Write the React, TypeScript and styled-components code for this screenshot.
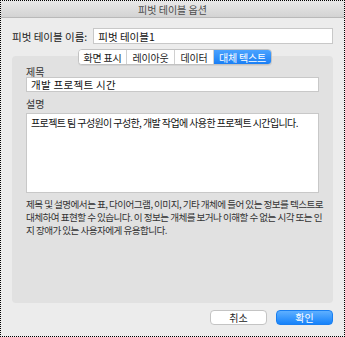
import React from 'react';
import styled, { createGlobalStyle } from 'styled-components';

const GlobalStyle = createGlobalStyle`
  html, body {
    margin: 0;
    padding: 0;
    background: #ececec;
  }
  body {
    font-family: "Noto Sans CJK KR", "Noto Sans", sans-serif;
    font-size: 11px;
    color: #222;
  }
`;

const Dialog = styled.div`
  width: 345px;
  height: 337px;
  box-sizing: border-box;
  border: 1px dotted #000;
  background: #ececec;
  display: flex;
  flex-direction: column;
`;

const TitleBar = styled.div`
  height: 16px;
  flex-shrink: 0;
  background: linear-gradient(#e8e8e8, #d3d3d3);
  border-bottom: 1px solid #b9b9b9;
  display: flex;
  align-items: center;
  justify-content: center;
  font-size: 10px;
  color: #4d4d4d;
`;

const Body = styled.div`
  flex: 1;
  display: flex;
  flex-direction: column;
  padding: 10px 11px 0 11px;
`;

const NameRow = styled.div`
  display: flex;
  align-items: center;
  gap: 6px;
  height: 16px;
`;

const Label = styled.span`
  font-size: 10.5px;
  color: #222;
  white-space: nowrap;
`;

const TextInput = styled.div`
  flex: 1;
  height: 16px;
  box-sizing: border-box;
  background: #fff;
  border: 1px solid #c8c8c8;
  padding: 0 4px;
  display: flex;
  align-items: center;
  font-size: 10.5px;
  color: #111;
`;

const PanelWrap = styled.div`
  margin-top: 12px;
  position: relative;
`;

const Tabs = styled.div`
  position: absolute;
  top: -7px;
  left: 66px;
  display: flex;
  height: 14px;
  border-radius: 4px;
  border: 1px solid #c2c2c2;
  background: #fff;
  overflow: hidden;
  box-shadow: 0 1px 0 rgba(0,0,0,0.06);
`;

const Tab = styled.div<{ $active?: boolean; $w: number }>`
  width: ${(p) => p.$w}px;
  display: flex;
  align-items: center;
  justify-content: center;
  font-size: 10px;
  letter-spacing: -0.2px;
  color: ${(p) => (p.$active ? '#fff' : '#222')};
  background: ${(p) => (p.$active ? 'linear-gradient(#4aa3ff, #1a7ff5)' : '#fff')};
  border-left: 1px solid #d0d0d0;
  &:first-child { border-left: none; }
`;

const Panel = styled.div`
  height: 247px;
  box-sizing: border-box;
  background: #e1e1e1;
  border-radius: 4px;
  padding: 10px 14px 0 14px;
  display: flex;
  flex-direction: column;
`;

const FieldLabel = styled.div<{ $gap?: number }>`
  font-size: 10px;
  color: #333;
  height: 11px;
  line-height: 11px;
  margin-bottom: ${(p) => p.$gap ?? 0}px;
`;

const FieldInput = styled(TextInput)`
  flex: none;
  height: 15px;
  margin-bottom: 6px;
  letter-spacing: 0.3px;
`;

const TextArea = styled.div`
  height: 80px;
  box-sizing: border-box;
  background: #fff;
  border: 1px solid #c8c8c8;
  padding: 1px 4px;
  font-size: 10px;
  letter-spacing: -0.6px;
  color: #111;
  white-space: nowrap;
`;

const Help = styled.p`
  margin: 5px 0 0 0;
  font-size: 9.6px;
  line-height: 13px;
  color: #333;
  letter-spacing: -0.55px;
  white-space: nowrap;
`;

const Footer = styled.div`
  display: flex;
  justify-content: flex-end;
  gap: 9px;
  margin-top: 7px;
`;

const Button = styled.div<{ $primary?: boolean }>`
  width: 57px;
  height: 15px;
  box-sizing: border-box;
  border-radius: 4px;
  display: flex;
  align-items: center;
  justify-content: center;
  font-size: 10px;
  color: ${(p) => (p.$primary ? '#fff' : '#222')};
  background: ${(p) => (p.$primary ? 'linear-gradient(#5fb0ff, #1682fa)' : '#fff')};
  border: 1px solid ${(p) => (p.$primary ? '#1a7ff0' : '#c4c4c4')};
`;

const tabs = [
  { label: '화면 표시', w: 47 },
  { label: '레이아웃', w: 47 },
  { label: '데이터', w: 38 },
  { label: '대체 텍스트', w: 57, active: true },
];

const helpLines = [
  '제목 및 설명에서는 표, 다이어그램, 이미지, 기타 개체에 들어 있는 정보를 텍스트로',
  '대체하여 표현할 수 있습니다. 이 정보는 개체를 보거나 이해할 수 없는 시각 또는 인',
  '지 장애가 있는 사용자에게 유용합니다.',
];

export default function App() {
  return (
    <>
      <GlobalStyle />
      <Dialog>
        <TitleBar>피벗 테이블 옵션</TitleBar>
        <Body>
          <NameRow>
            <Label>피벗 테이블 이름:</Label>
            <TextInput>피벗 테이블1</TextInput>
          </NameRow>
          <PanelWrap>
            <Panel>
              <FieldLabel>제목</FieldLabel>
              <FieldInput>개발 프로젝트 시간</FieldInput>
              <FieldLabel $gap={4}>설명</FieldLabel>
              <TextArea>프로젝트 팀 구성원이 구성한, 개발 작업에 사용한 프로젝트 시간입니다.</TextArea>
              <Help>
                {helpLines.map((l, i) => (
                  <React.Fragment key={i}>
                    {l}
                    {i < helpLines.length - 1 && <br />}
                  </React.Fragment>
                ))}
              </Help>
            </Panel>
            <Tabs>
              {tabs.map((t) => (
                <Tab key={t.label} $w={t.w} $active={t.active}>
                  {t.label}
                </Tab>
              ))}
            </Tabs>
          </PanelWrap>
          <Footer>
            <Button>취소</Button>
            <Button $primary>확인</Button>
          </Footer>
        </Body>
      </Dialog>
    </>
  );
}
